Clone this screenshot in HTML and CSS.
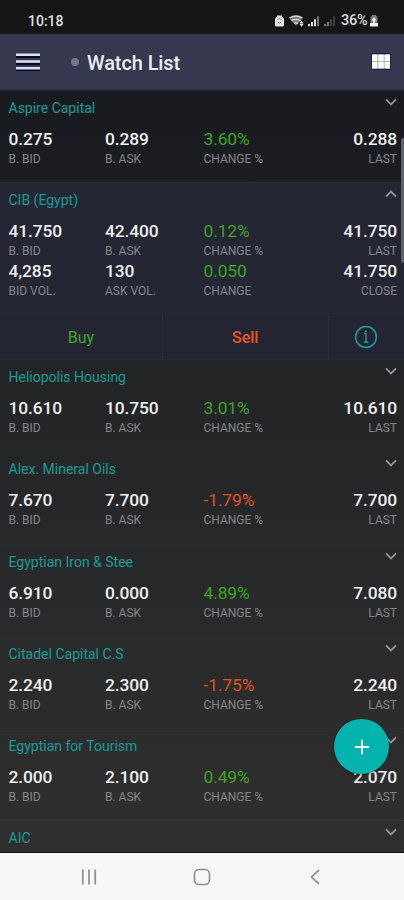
FILE: index.html
```
<!DOCTYPE html>
<html lang="en">
<head>
<meta charset="utf-8">
<title>Watch List</title>
<link rel="stylesheet" href="styles.css">
</head>
<body>
<div class="phone">
  <div class="status">
    <span class="time">10:18</span>
    <svg class="status-icons" width="62" height="14" viewBox="0 0 62 14">
      <path d="M3 1.500h5v1.200a3 3 0 0 1 2 2.300v6a1.500 1.500 0 0 1-1.500 1.500h-6A1.500 1.500 0 0 1 1 11V5a3 3 0 0 1 2-2.300z" fill="#e4e4e4"/>
      <path d="M3.500 5.500 5.500 4.300l2 1.200M4 8.200l1.500 1 1.500-1" fill="none" stroke="#777" stroke-width="1"/>
      <path d="M15.500 4.200q6.500-4.400 13 0l-6.500 7.800z" fill="#777"/>
      <path d="M15.500 4q6.500-4 13 0M17.500 6.700q4.500-2.700 9 0M20 9.400q2-1.400 4 0" fill="none" stroke="#ddd" stroke-width="1.400"/>
      <path d="M25.500 9.500l2-3 2 3zM25.500 10h4l-2 2.800z" fill="#eee"/>
      <path d="M34 12.300v-2.300h2v2.300zM37 12.300v-4.300h2v4.300zM40 12.300v-7h2v7z" fill="#ddd"/>
      <path d="M43 12.300v-10h2v10z" fill="#777"/>
      <path d="M50 12.300v-2.300h2v2.300zM53 12.300v-4.300h2v4.300z" fill="#777"/>
      <path d="M56 12.300v-7h2v7zM59 12.300v-10h2v10z" fill="#3f3f3f"/>
    </svg>
    <span class="percent">36%</span>
    <svg class="battery" width="10" height="14" viewBox="0 0 10 14">
      <path d="M3 1h4v1.300h1.500V9h-7V2.300H3z" fill="#777"/>
      <path d="M5 3 7.800 6.500H6V9h3v3.500H1V9h3V6.500H2.200z" fill="#eee"/>
    </svg>
  </div>

  <header class="appbar">
    <svg class="menu" width="26" height="20" viewBox="0 0 26 20">
      <path d="M1 5h24M1 12h24M1 18h24" stroke="#070936" stroke-width="2"/>
      <path d="M1 2.800h24M1 9.500h24M1 16.200h24" stroke="#dfe1ea" stroke-width="2.600"/>
    </svg>
    <span class="dot"></span>
    <h1>Watch List</h1>
    <svg class="grid" width="20" height="17" viewBox="0 0 20 17">
      <path d="M0 0h20v17H0z" fill="#20224c"/>
      <path d="M1 1.500h18v14H1z" fill="#b4b4be"/>
      <path d="M1 1.500h5.300v6.500H1zM7.400 1.500h5.300v6.500H7.400zM13.700 1.500H19v6.500h-5.300zM1 9h5.300v6.500H1zM7.400 9h5.300v6.500H7.400zM13.700 9H19v6.500h-5.300z" fill="#fff"/>
    </svg>
  </header>

  <main class="list">
    <section class="row">
      <div class="head"><h2>Aspire Capital</h2><svg class="chev" viewBox="0 0 14 8"><path d="M2 1.300 7 6.300l5-5"/></svg></div>
      <div class="cells">
        <div><b>0.275</b><span>B. BID</span></div><div><b>0.289</b><span>B. ASK</span></div><div class="up"><b>3.60%</b><span>CHANGE %</span></div><div class="end"><b>0.288</b><span>LAST</span></div>
      </div>
    </section>
    <section class="row open">
      <div class="head"><h2>CIB (Egypt)</h2><svg class="chev" viewBox="0 0 14 8"><path d="M2 6.700 7 1.700l5 5"/></svg></div>
      <div class="cells">
        <div><b>41.750</b><span>B. BID</span></div><div><b>42.400</b><span>B. ASK</span></div><div class="up"><b>0.12%</b><span>CHANGE %</span></div><div class="end"><b>41.750</b><span>LAST</span></div>
        <div><b>4,285</b><span>BID VOL.</span></div><div><b>130</b><span>ASK VOL.</span></div><div class="up"><b>0.050</b><span>CHANGE</span></div><div class="end"><b>41.750</b><span>CLOSE</span></div>
      </div>
      <div class="actions">
        <div class="buy">Buy</div>
        <div class="sell">Sell</div>
        <div class="info">
          <svg width="24" height="24" viewBox="0 0 24 24" fill="none" stroke="#1c9ba4">
            <circle cx="12" cy="12" r="10.400" stroke-width="1.500"/>
            <path d="M10 8.500h2v8.500M9.800 17.300h4.600" stroke-width="1.400"/>
            <circle cx="11.800" cy="6.300" r=".6" fill="#1c9ba4"/>
          </svg>
        </div>
      </div>
    </section>
    <section class="row">
      <div class="head"><h2>Heliopolis Housing</h2><svg class="chev" viewBox="0 0 14 8"><path d="M2 1.300 7 6.300l5-5"/></svg></div>
      <div class="cells">
        <div><b>10.610</b><span>B. BID</span></div><div><b>10.750</b><span>B. ASK</span></div><div class="up"><b>3.01%</b><span>CHANGE %</span></div><div class="end"><b>10.610</b><span>LAST</span></div>
      </div>
    </section>
    <section class="row">
      <div class="head"><h2>Alex. Mineral Oils</h2><svg class="chev" viewBox="0 0 14 8"><path d="M2 1.300 7 6.300l5-5"/></svg></div>
      <div class="cells">
        <div><b>7.670</b><span>B. BID</span></div><div><b>7.700</b><span>B. ASK</span></div><div class="down"><b>-1.79%</b><span>CHANGE %</span></div><div class="end"><b>7.700</b><span>LAST</span></div>
      </div>
    </section>
    <section class="row">
      <div class="head"><h2>Egyptian Iron &amp; Stee</h2><svg class="chev" viewBox="0 0 14 8"><path d="M2 1.300 7 6.300l5-5"/></svg></div>
      <div class="cells">
        <div><b>6.910</b><span>B. BID</span></div><div><b>0.000</b><span>B. ASK</span></div><div class="up"><b>4.89%</b><span>CHANGE %</span></div><div class="end"><b>7.080</b><span>LAST</span></div>
      </div>
    </section>
    <section class="row">
      <div class="head"><h2>Citadel Capital C.S</h2><svg class="chev" viewBox="0 0 14 8"><path d="M2 1.300 7 6.300l5-5"/></svg></div>
      <div class="cells">
        <div><b>2.240</b><span>B. BID</span></div><div><b>2.300</b><span>B. ASK</span></div><div class="down"><b>-1.75%</b><span>CHANGE %</span></div><div class="end"><b>2.240</b><span>LAST</span></div>
      </div>
    </section>
    <section class="row">
      <div class="head"><h2>Egyptian for Tourism</h2><svg class="chev" viewBox="0 0 14 8"><path d="M2 1.300 7 6.300l5-5"/></svg></div>
      <div class="cells">
        <div><b>2.000</b><span>B. BID</span></div><div><b>2.100</b><span>B. ASK</span></div><div class="up"><b>0.49%</b><span>CHANGE %</span></div><div class="end"><b>2.070</b><span>LAST</span></div>
      </div>
    </section>
    <section class="row">
      <div class="head"><h2>AIC</h2><svg class="chev" viewBox="0 0 14 8"><path d="M2 1.300 7 6.300l5-5"/></svg></div>
    </section>
    <div class="scrollbar"></div>
    <div class="fab"><svg width="16" height="16" viewBox="0 0 16 16"><path d="M8 .8v14.400M.8 8h14.400" stroke="#fff" stroke-width="2"/></svg></div>
  </main>

  <nav class="navbar">
    <svg width="16" height="16" viewBox="0 0 16 16"><path d="M1.800 .5v15M8 .5v15M14.200 .5v15" stroke="#929292" stroke-width="1.800"/></svg>
    <svg width="18" height="18" viewBox="0 0 18 18"><rect x="1.500" y="1.500" width="15" height="15" rx="4.500" fill="none" stroke="#8b8b8b" stroke-width="1.600"/></svg>
    <svg width="16" height="16" viewBox="0 0 16 16"><path d="M12 1.200 4.500 8l7.500 6.800" fill="none" stroke="#8b8b8b" stroke-width="1.600"/></svg>
  </nav>
</div>
</body>
</html>
```
FILE: styles.css
```
* { box-sizing: border-box; }
body { margin: 0; font-family: Roboto, "Liberation Sans", sans-serif; background: #161616; }
h1, h2, b { margin: 0; font-weight: 400; }
.phone { width: 404px; height: 900px; display: flex; flex-direction: column; overflow: hidden; }

.status { height: 34px; flex: none; background: #151515; color: #dedede; display: flex; align-items: center; padding: 7px 0 0 28px; font-size: 14px; font-weight: 500; }
.time { width: 246px; }
.status-icons { flex: none; }
.percent { margin-left: 5px; width: 28px; font-size: 14.5px; letter-spacing: -0.2px; }

.appbar { height: 56px; flex: none; background: #35384f; display: flex; align-items: center; padding: 0 13px 0 15px; border-bottom: 1px solid #2b2e44; }
.dot { width: 8px; height: 8px; margin-left: 30px; border-radius: 50%; background: #737792; }
.appbar h1 { margin: 2px 0 0 8px; flex: 1; font-size: 20px; font-weight: 500; color: #eceef6; line-height: 28px; letter-spacing: -0.1px; }

.list { position: relative; height: 763px; flex: none; overflow: hidden; background: linear-gradient(#191a1f, #242527 42%, #2f2f2f); border-bottom: 1px solid #0c0c0c; }
.row { height: 92.25px; padding: 8px 7px 0 8.5px; border-top: 1px solid rgba(255, 255, 255, 0.035); }
.row:first-child { height: 92px; border-top-color: #202332; }
.row.open { height: 177px; background: #242633; padding-left: 0; padding-right: 0; }
.open .head, .open .cells { padding: 0 7px 0 8.5px; }
.head { display: flex; justify-content: space-between; height: 18px; }
.head h2 { font-size: 14px; line-height: 18px; color: #179d96; }
.chev { width: 14px; height: 8px; margin: -1px -1px 0 0; fill: none; stroke: #92949a; stroke-width: 1.9; }
.cells { display: grid; grid-template-columns: 96.5px 98.5px 1fr 80px; color: #f0f0f0; }
.cells, .open .cells { padding-top: 12px; }
.cells b, .cells span { display: block; height: 20px; line-height: 20px; white-space: nowrap; }
.cells b { font-size: 17.4px; font-weight: 500; letter-spacing: -0.1px; }
.cells span { font-size: 12px; color: #85868a; }
.cells .up b { color: #3ca51d; font-weight: 400; }
.cells .down b { color: #e0521b; font-weight: 400; }
.cells .end { text-align: right; }

.actions { display: grid; grid-template-columns: 163px 165.5px 75.5px; height: 47px; margin-top: 12px; border-top: 1px solid #282a36; background: #232632; font-size: 16px; }
.actions > div { display: flex; align-items: center; justify-content: center; border-right: 1px solid #2b2e39; }
.actions .buy { color: #40a826; }
.actions .sell { color: #ed571d; font-weight: 500; }
.actions .info { border-right: 0; padding-bottom: 1px; }

.scrollbar { position: absolute; right: 0; top: 48px; width: 3px; height: 125px; border-radius: 2px 0 0 2px; background: #61636c; }
.fab { position: absolute; left: 334px; top: 629px; width: 55px; height: 55px; border-radius: 50%; background: #04b2ae; display: flex; align-items: center; justify-content: center; box-shadow: 0 1px 3px rgba(0, 0, 0, 0.4); }

.navbar { flex: 1; background: #f7f7f7; display: flex; align-items: center; padding: 0 81px; justify-content: space-between; }
```
